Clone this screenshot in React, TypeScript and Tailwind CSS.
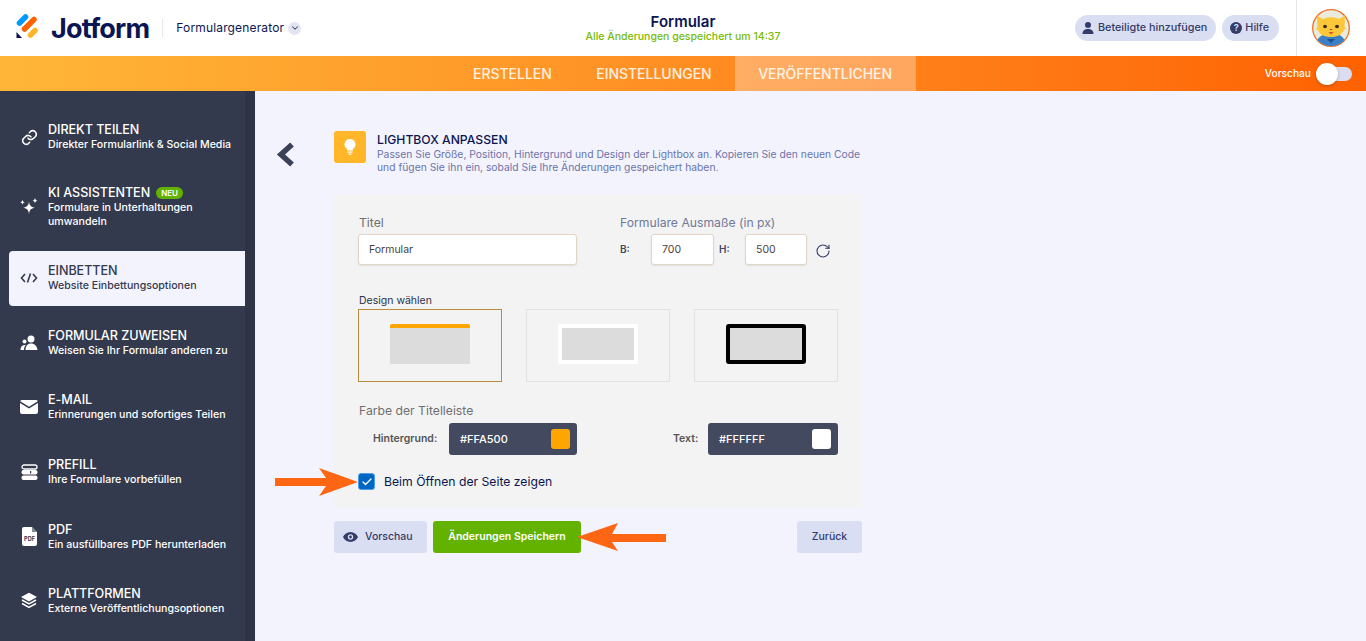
import { Check, ChevronDown, RotateCw } from "lucide-react";
import type { ReactNode } from "react";

const font = { fontFamily: "Inter, 'Noto Sans', sans-serif" };

function LinkIcon() {
  return (
    <svg width="17" height="17" viewBox="0 0 24 24" fill="none" stroke="#fff" strokeWidth="2.2" strokeLinecap="round" strokeLinejoin="round">
      <path d="M10 13a5 5 0 0 0 7.5.5l3-3a5 5 0 0 0-7-7l-1.7 1.700" />
      <path d="M14 11a5 5 0 0 0-7.5-.5l-3 3a5 5 0 0 0 7 7l1.700-1.700" />
    </svg>
  );
}

function SparkIcon() {
  return (
    <svg width="18" height="18" viewBox="0 0 18 18" fill="#fff">
      <path d="M9 3.500c.6 4.200 1.800 5.400 6 6.200-4.200.8-5.400 2-6 6.300-.6-4.300-1.800-5.500-6-6.300 4.200-.8 5.400-2 6-6.200z" />
      <path d="M2.500 1.800c.3 1.600.9 2.200 2.500 2.500-1.600.3-2.200.9-2.500 2.500C2.200 5.200 1.600 4.600 0 4.300c1.600-.3 2.200-.9 2.500-2.500z" />
      <path d="M15 0c.3 1.700 1 2.400 2.700 2.700-1.700.3-2.400 1-2.700 2.700-.3-1.700-1-2.400-2.700-2.700C14 2.400 14.700 1.700 15 0z" />
    </svg>
  );
}

function CodeIcon() {
  return (
    <svg width="18" height="12" viewBox="0 0 18 12" fill="none" stroke="#343a4d" strokeWidth="1.600">
      <path d="M5 2 1.500 6 5 10" />
      <path d="M13 2l3.500 4L13 10" />
      <path d="M10.500 1.500 7.500 10.500" />
    </svg>
  );
}

function PeopleIcon() {
  return (
    <svg width="18" height="16" viewBox="0 0 18 16" fill="#fff">
      <circle cx="11" cy="4" r="3.500" />
      <circle cx="4.500" cy="6.500" r="2" />
      <path d="M5.500 15c0-4 2-6.500 5.500-6.500s6 2.500 6.500 6.500z" />
      <path d="M.5 15c0-2.800 1.300-5 4-5 .4 0 .8 0 1.200.2C4.500 11.300 4 13 4 15z" />
    </svg>
  );
}

function MailIcon() {
  return (
    <svg width="18" height="14" viewBox="0 0 18 14" fill="#fff">
      <path d="M2 0h14a2 2 0 0 1 1.800 1.200L9 6.800.2 1.200A2 2 0 0 1 2 0z" />
      <path d="M0 3l9 5.600L18 3v9a2 2 0 0 1-2 2H2a2 2 0 0 1-2-2z" />
    </svg>
  );
}

function PrefillIcon() {
  return (
    <svg width="17" height="16" viewBox="0 0 17 16">
      <rect x="1" y="1" width="15" height="4" rx="2" fill="none" stroke="#fff" strokeWidth="1.300" />
      <rect x=".5" y="6" width="16" height="4.500" rx="2" fill="#fff" />
      <rect x=".5" y="11.500" width="16" height="4.500" rx="2" fill="#fff" />
      <rect x="9" y="7" width="1.200" height="2.500" fill="#343a4d" />
    </svg>
  );
}

function PdfIcon() {
  return (
    <svg width="15" height="19" viewBox="0 0 15 19">
      <path d="M2 0h8l5 5v12a2 2 0 0 1-2 2H2a2 2 0 0 1-2-2V2a2 2 0 0 1 2-2z" fill="#fff" />
      <path d="M10 0l5 5h-5z" fill="#343a4d" opacity=".6" />
      <text x="7.500" y="14" textAnchor="middle" fontSize="5.500" fontWeight="700" fill="#343a4d" fontFamily="Inter, sans-serif">PDF</text>
    </svg>
  );
}

function LayersIcon() {
  return (
    <svg width="18" height="18" viewBox="0 0 18 18" fill="none">
      <path d="M9 .8 17 5 9 9.400 1 5z" fill="#fff" />
      <path d="M2 8l7 3.800L16 8M2 11.500l7 3.800 7-3.800" stroke="#fff" strokeWidth="1.500" strokeLinejoin="round" />
    </svg>
  );
}

function Logo() {
  return (
    <svg width="23" height="25" viewBox="0 0 23 25" className="mb-[3px]" fill="none" strokeLinecap="round" strokeWidth="5.500">
      <path d="M3.500 9 9.500 3" stroke="#0099ff" />
      <path d="M8.500 15 18 5.500" stroke="#ff6100" />
      <path d="M14.500 21 19 16.500" stroke="#ffb629" />
      <path d="M.5 18 6 24H.5z" fill="#0a1551" />
    </svg>
  );
}

function Mascot() {
  return (
    <svg width="38" height="38" viewBox="0 0 38 38">
      <circle cx="19" cy="19" r="18.300" fill="#e9ecdc" stroke="#f0702a" strokeWidth="1.300" />
      <path d="M5.500 31c2-4 7-7 13.500-7s11.500 3 13.500 7a18 18 0 0 1-27 0z" fill="#3b7fc4" />
      <path d="M5 6.500l6 3.500c5-2.500 11-2.500 16 0l6-3.500-.5 11.500 2 1.500-2.500 1c-1.500 5-7 7.500-13 7.500S7.500 26 6 21l-2.500-1 2-1.500z" fill="#fdc73a" />
      <ellipse cx="13" cy="17.500" rx="2" ry="1.800" fill="#3a2a20" />
      <ellipse cx="25" cy="17.500" rx="2" ry="1.800" fill="#3a2a20" />
      <path d="M17.500 20h3L19 21.500z" fill="#a0452a" />
      <path d="M16.500 23h5L19 25.500z" fill="#d8532a" />
      <path d="M15 30h8l-4 4z" fill="#1e4f8c" />
    </svg>
  );
}

type Item = {
  title: string;
  sub: ReactNode;
  icon: ReactNode;
  badge?: boolean;
  active?: boolean;
};

const items: Item[] = [
  { title: "DIREKT TEILEN", sub: "Direkter Formularlink & Social Media", icon: <LinkIcon /> },
  { title: "KI ASSISTENTEN", sub: "Formulare in Unterhaltungen umwandeln", icon: <SparkIcon />, badge: true },
  { title: "EINBETTEN", sub: "Website Einbettungsoptionen", icon: <CodeIcon />, active: true },
  { title: "FORMULAR ZUWEISEN", sub: "Weisen Sie Ihr Formular anderen zu", icon: <PeopleIcon /> },
  { title: "E-MAIL", sub: "Erinnerungen und sofortiges Teilen", icon: <MailIcon /> },
  { title: "PREFILL", sub: "Ihre Formulare vorbefüllen", icon: <PrefillIcon /> },
  { title: "PDF", sub: "Ein ausfüllbares PDF herunterladen", icon: <PdfIcon /> },
  { title: "PLATTFORMEN", sub: "Externe Veröffentlichungsoptionen", icon: <LayersIcon /> },
];

function SideItem({ item }: { item: Item }) {
  return (
    <div
      className={
        item.active
          ? "flex items-center rounded-l-[4px] bg-[#f3f3fe] pl-[10px] pt-[12px] pb-[13px] text-[#343a4d]"
          : item.badge
            ? "flex items-center rounded-l-[4px] pl-[10px] pt-[10.500px] pb-[12.100px] text-white"
            : "flex items-center rounded-l-[4px] pl-[10px] pt-[12px] pb-[13px] text-white"
      }
    >
      <div className="flex w-[29px] shrink-0 justify-center pr-[9px]">{item.icon}</div>
      <div className="w-[190px]">
        <div className="flex h-[16px] items-center gap-[6px] text-[12.600px] font-medium leading-[16px] tracking-[-0.05px]">
          {item.title}
          {item.badge && (
            <span className="rounded-full bg-[#64b200] px-[5px] text-[8px] font-semibold leading-[12px] text-white">NEU</span>
          )}
        </div>
        <div className="text-[10.600px] font-medium leading-[14px]">{item.sub}</div>
      </div>
    </div>
  );
}

function Field({ value, className }: { value: string; className: string }) {
  return (
    <div className={`flex h-[31px] items-center rounded-[3px] border border-[#e3d5c5] bg-white text-[10.500px] font-normal text-[#4a3f3a] shadow-[0_1px_2px_rgba(0,0,0,0.08)] ${className}`}>
      {value}
    </div>
  );
}

function Swatch({ code, color, className }: { code: string; color: string; className: string }) {
  return (
    <div className={`flex h-[32px] items-center justify-between rounded-[3px] bg-[#434a60] pl-[11px] pr-[7px] text-[11px] font-medium text-white ${className}`}>
      {code}
      <span className="h-[20px] w-[19px] rounded-[3px]" style={{ backgroundColor: color }} />
    </div>
  );
}

export default function App() {
  return (
    <div className="flex h-[641px] w-[1366px] flex-col overflow-hidden bg-[#f3f3fe]" style={font}>
      <header className="grid h-[56px] shrink-0 grid-cols-[1fr_auto_1fr] items-center bg-white">
        <div className="flex items-center pl-[16px]">
          <Logo />
          <span className="ml-[12px] text-[27px] font-bold leading-none tracking-[-0.8px] text-[#0a1551]">Jotform</span>
          <span className="ml-[13px] h-[18px] w-px bg-[#e3e5f5]" />
          <span className="ml-[13px] text-[12px] tracking-[0.15px] text-[#0a1551]">Formulargenerator</span>
          <span className="ml-[4px] flex h-[13px] w-[13px] items-center justify-center rounded-full bg-[#e3e5f5]">
            <ChevronDown size={10} color="#434a60" strokeWidth={2.500} />
          </span>
        </div>
        <div className="flex flex-col items-center">
          <span className="text-[15px] font-semibold leading-[18px] text-[#0a1551]">Formular</span>
          <span className="text-[10.500px] font-medium leading-[12px] text-[#78bb07]">Alle Änderungen gespeichert um 14:37</span>
        </div>
        <div className="flex items-center justify-end">
          <div className="flex h-[26px] items-center gap-[4px] whitespace-nowrap rounded-full bg-[#dadef3] pl-[7px] pr-[9px] text-[10.800px] font-medium text-[#343c6a]">
            <svg width="12" height="12" viewBox="0 0 12 12" fill="#343c6a">
              <circle cx="6" cy="3" r="3" />
              <path d="M.5 12c0-3.500 2-5 5.500-5s5.500 1.500 5.500 5z" />
            </svg>
            Beteiligte hinzufügen
          </div>
          <div className="ml-[6px] flex h-[26px] items-center gap-[3px] rounded-full bg-[#dadef3] pl-[8px] pr-[10px] text-[10.800px] font-medium text-[#343c6a]">
            <span className="flex h-[12px] w-[12px] items-center justify-center rounded-full bg-[#343c6a] text-[9px] font-bold text-[#dadef3]">?</span>
            Hilfe
          </div>
          <div className="ml-[17px] flex h-[56px] w-[70px] items-center border-l border-[#e3e5f5] pl-[15px]">
            <Mascot />
          </div>
        </div>
      </header>

      <nav className="relative flex h-[35px] shrink-0 items-stretch bg-gradient-to-r from-[#ffb638] to-[#ff6100] pl-[473px] text-[14px] font-medium tracking-[-0.03px] text-white/85">
        <span className="flex items-center">ERSTELLEN</span>
        <span className="ml-[44.500px] flex items-center">EINSTELLUNGEN</span>
        <span className="ml-[23px] flex w-[181px] items-center justify-center bg-white/30">VERÖFFENTLICHEN</span>
        <div className="absolute right-[14px] top-0 flex h-[35px] items-center gap-[5px] text-[10.200px] font-medium tracking-normal text-white">
          Vorschau
          <span className="flex h-[14px] w-[36px] items-center rounded-full bg-[#dadef0]">
            <span className="-my-[4px] h-[22px] w-[22px] rounded-full bg-white shadow-[0_1px_3px_rgba(0,0,0,0.25)]" />
          </span>
        </div>
      </nav>

      <div className="flex min-h-0 flex-1">
        <aside className="flex w-[255px] shrink-0 flex-col gap-[9.700px] border-r-[10px] border-[#2e3345] bg-[#343a4d] pl-[9px] pt-[19px]">
          {items.map((item) => (
            <SideItem key={item.title} item={item} />
          ))}
        </aside>

        <main className="flex flex-1 pl-[21px] pt-[40px]">
          <svg width="19" height="25" viewBox="0 0 19 25" className="mt-[11px] shrink-0" fill="none" stroke="#3a4258" strokeWidth="5.500">
            <path d="M16 2.500 5 12.500l11 10" />
          </svg>
          <div className="ml-[39px] w-[528px]">
            <div className="flex gap-[11px]">
              <div className="flex h-[32px] w-[32px] shrink-0 items-center justify-center rounded-[3px] bg-[#ffb629]">
                <svg width="12" height="16" viewBox="0 0 12 16" fill="#fff">
                  <path d="M6 0a5.500 5.500 0 0 0-3 10.100V11.500h6v-1.400A5.500 5.500 0 0 0 6 0z" />
                  <rect x="3.500" y="12.500" width="5" height="1.200" />
                  <rect x="4.500" y="14.500" width="3" height="1.200" />
                </svg>
              </div>
              <div className="pt-[1px]">
                <div className="text-[12.200px] font-medium leading-[16px] text-[#0a1551]">LIGHTBOX ANPASSEN</div>
                <p className="w-[490px] text-[10.330px] leading-[13px] text-[#6c73a8]">
                  Passen Sie Größe, Position, Hintergrund und Design der Lightbox an. Kopieren Sie den neuen Code und fügen Sie ihn ein, sobald Sie Ihre Änderungen gespeichert haben.
                </p>
              </div>
            </div>

            <section className="mt-[20px] h-[314px] bg-[#f3f3f3] px-[24px] pt-[21px]">
              <div className="flex">
                <div className="w-[262px]">
                  <div className="pl-px text-[12.200px] leading-[16px] text-[#6f6f6f]">Titel</div>
                  <Field value="Formular" className="mt-[3px] w-[219px] pl-[10px]" />
                </div>
                <div>
                  <div className="text-[12.200px] leading-[16px] text-[#6f7a99]">Formulare Ausmaße (in px)</div>
                  <div className="mt-[3px] flex items-center text-[10px] font-semibold text-[#434a60]">
                    <span className="w-[31px]">B:</span>
                    <Field value="700" className="w-[63px] pl-[10px]" />
                    <span className="ml-[5px] w-[26px]">H:</span>
                    <Field value="500" className="w-[62px] pl-[10px]" />
                    <RotateCw size={16} color="#343c6a" strokeWidth={1.600} className="ml-[8px] mt-[3px]" />
                  </div>
                </div>
              </div>

              <div className="mt-[29px] pl-px text-[10.500px] leading-[14px] text-[#2b3245]">Design wählen</div>
              <div className="mt-[1px] grid grid-cols-3 gap-[24px]">
                <div className="flex h-[73px] items-center justify-center border border-[#b98d3f]">
                  <div className="mb-[3px] h-[40px] w-[80px] rounded-t-[2px] border-t-[4px] border-[#ffa500] bg-[#dcdcdc]" />
                </div>
                <div className="flex h-[73px] items-center justify-center border border-[#e2e2e2]">
                  <div className="mb-[3px] h-[40px] w-[80px] rounded-[2px] border-[4px] border-white bg-[#dcdcdc]" />
                </div>
                <div className="flex h-[73px] items-center justify-center border border-[#e2e2e2]">
                  <div className="mb-[3px] h-[40px] w-[80px] rounded-[3px] border-[4px] border-black bg-[#dcdcdc]" />
                </div>
              </div>

              <div className="mt-[21px] pl-px text-[12.200px] leading-[16px] text-[#6f6f6f]">Farbe der Titelleiste</div>
              <div className="mt-[4px] flex items-center text-[10.500px] font-semibold text-[#555]">
                <span className="ml-[15px] w-[76px]">Hintergrund:</span>
                <Swatch code="#FFA500" color="#ffa500" className="w-[128px]" />
                <span className="ml-[96px] w-[35px]">Text:</span>
                <Swatch code="#FFFFFF" color="#ffffff" className="w-[130px]" />
              </div>

              <div className="relative mt-[18px] flex items-center gap-[9px]">
                <span className="flex h-[17px] w-[17px] items-center justify-center rounded-[3px] border border-[#4d9ce6] bg-[#0066c3]">
                  <Check size={12} color="#fff" strokeWidth={2.500} />
                </span>
                <span className="text-[12.200px] leading-[17px] text-[#0a1551]">Beim Öffnen der Seite zeigen</span>
                <svg className="absolute left-[-83px] top-[-6px]" width="86" height="30" viewBox="0 0 86 30">
                  <path d="M83 15 44 1 51 11H0V19H51L44 29z" fill="#ff6614" />
                </svg>
              </div>
            </section>

            <div className="mt-[13px] flex text-[10.500px] font-medium">
              <button className="flex h-[32px] w-[93px] items-center gap-[7px] rounded-[3px] bg-[#dadef3] pl-[9px] text-[#343c6a]">
                <svg width="15" height="10" viewBox="0 0 15 10">
                  <path fillRule="evenodd" fill="#343c6a" d="M7.500 0C11 0 13.700 2.200 15 5c-1.300 2.800-4 5-7.500 5S1.300 7.800 0 5C1.300 2.200 4 0 7.500 0zm0 2.300a2.700 2.700 0 1 0 0 5.400 2.700 2.700 0 0 0 0-5.400z" />
                  <circle cx="7.500" cy="5" r="1.400" fill="#343c6a" />
                </svg>
                Vorschau
              </button>
              <button className="relative ml-[6px] flex h-[32px] w-[148px] items-center justify-center rounded-[3px] bg-[#64b200] font-semibold text-white">
                Änderungen Speichern
                <svg className="absolute left-[144px] top-[1px]" width="89" height="30" viewBox="0 0 89 30">
                  <path d="M0 15 41 1 35 12H89V20H35L41 29z" fill="#ff6614" />
                </svg>
              </button>
              <button className="ml-auto flex h-[32px] w-[65px] items-center justify-center rounded-[3px] bg-[#dadef3] text-[#343c6a]">
                Zurück
              </button>
            </div>
          </div>
        </main>
      </div>
    </div>
  );
}
